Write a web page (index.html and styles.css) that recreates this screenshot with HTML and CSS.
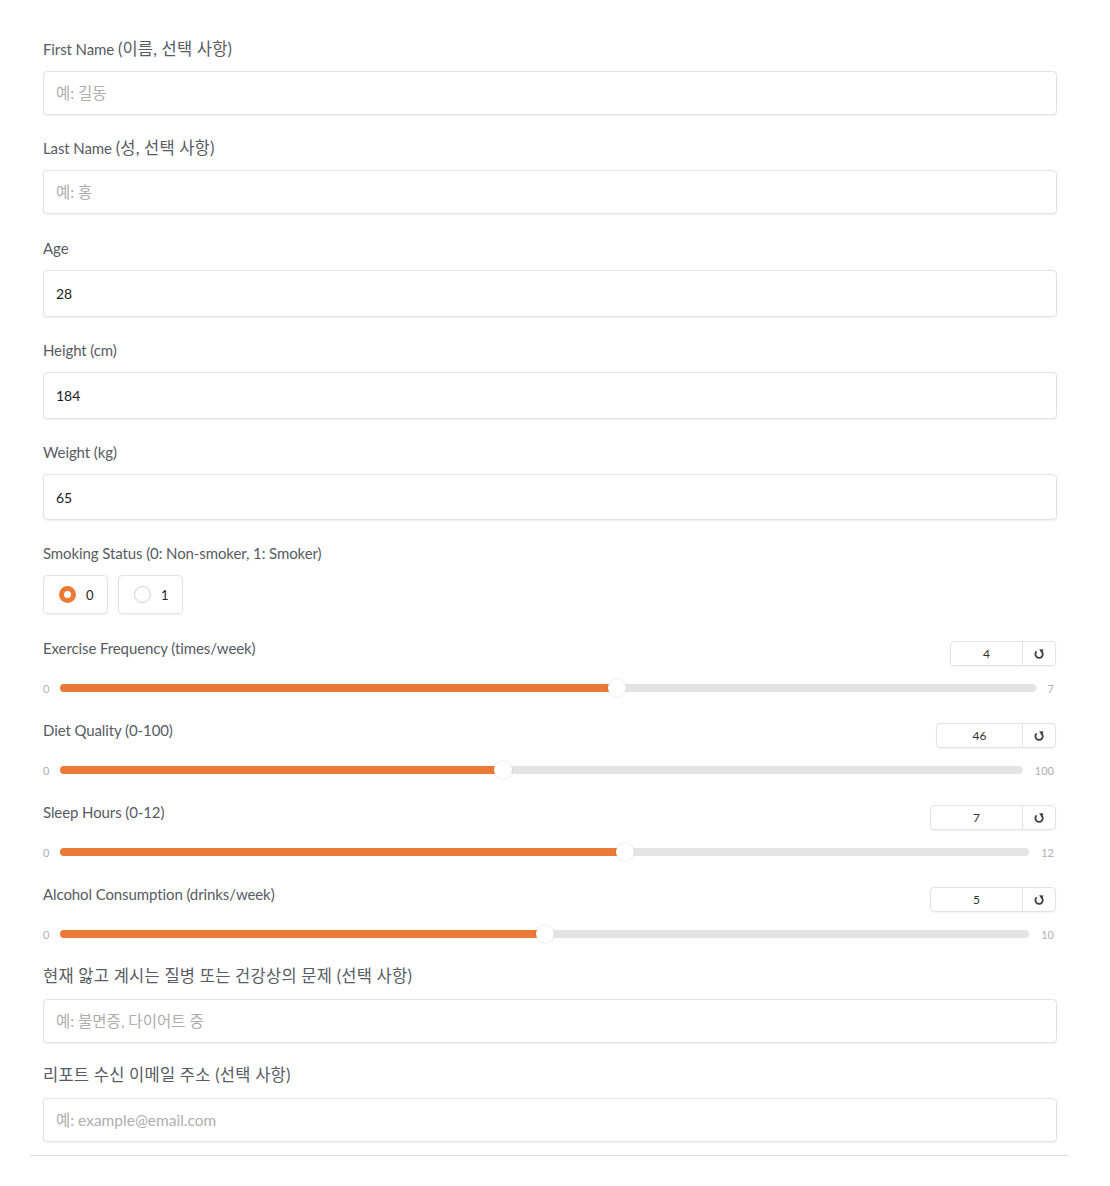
FILE: index.html
```html
<!DOCTYPE html>
<html lang="ko">
<head>
<meta charset="utf-8">
<title>Form</title>
<link rel="stylesheet" href="styles.css">
</head>
<body>
<div class="page">
  <div class="form">
    <div class="field">
      <label class="lbl">First Name <span class="ko">(이름, 선택 사항)</span></label>
      <input class="txt h44" type="text" placeholder="예: 길동">
    </div>
    <div class="field gap24">
      <label class="lbl">Last Name <span class="ko">(성, 선택 사항)</span></label>
      <input class="txt h44" type="text" placeholder="예: 홍">
    </div>
    <div class="field">
      <label class="lbl">Age</label>
      <input class="txt h47" type="text" value="28">
    </div>
    <div class="field">
      <label class="lbl">Height (cm)</label>
      <input class="txt h47" type="text" value="184">
    </div>
    <div class="field">
      <label class="lbl">Weight (kg)</label>
      <input class="txt h46" type="text" value="65">
    </div>
    <div class="field gap24">
      <label class="lbl">Smoking Status (0: Non-smoker, 1: Smoker)</label>
      <div class="radios">
        <div class="radio"><span class="dot on"></span><span>0</span></div>
        <div class="radio"><span class="dot"></span><span>1</span></div>
      </div>
    </div>

    <div class="slider">
      <div class="shead">
        <span class="lbl">Exercise Frequency (times/week)</span>
        <div class="num"><span class="val w73">4</span><span class="reset"><svg viewBox="0 0 12 12" width="12" height="12"><path d="M3.6 3.4 A3.7 3.7 0 1 0 8.3 3.2" fill="none" stroke="#3b3f4a" stroke-width="1.8"/><path d="M6.2 1.2 L10.6 1.6 L8.6 5.2 Z" fill="#3b3f4a"/></svg></span></div>
      </div>
      <div class="srow">
        <span class="mn">0</span>
        <div class="track"><div class="fill" style="width:57.14%"><span class="thumb"></span></div></div>
        <span class="mx">7</span>
      </div>
    </div>

    <div class="slider">
      <div class="shead">
        <span class="lbl">Diet Quality (0-100)</span>
        <div class="num"><span class="val w87">46</span><span class="reset"><svg viewBox="0 0 12 12" width="12" height="12"><path d="M3.6 3.4 A3.7 3.7 0 1 0 8.3 3.2" fill="none" stroke="#3b3f4a" stroke-width="1.8"/><path d="M6.2 1.2 L10.6 1.6 L8.6 5.2 Z" fill="#3b3f4a"/></svg></span></div>
      </div>
      <div class="srow">
        <span class="mn">0</span>
        <div class="track"><div class="fill" style="width:46%"><span class="thumb"></span></div></div>
        <span class="mx">100</span>
      </div>
    </div>

    <div class="slider">
      <div class="shead">
        <span class="lbl">Sleep Hours (0-12)</span>
        <div class="num"><span class="val w93">7</span><span class="reset"><svg viewBox="0 0 12 12" width="12" height="12"><path d="M3.6 3.4 A3.7 3.7 0 1 0 8.3 3.2" fill="none" stroke="#3b3f4a" stroke-width="1.8"/><path d="M6.2 1.2 L10.6 1.6 L8.6 5.2 Z" fill="#3b3f4a"/></svg></span></div>
      </div>
      <div class="srow">
        <span class="mn">0</span>
        <div class="track"><div class="fill" style="width:58.33%"><span class="thumb"></span></div></div>
        <span class="mx">12</span>
      </div>
    </div>

    <div class="slider">
      <div class="shead">
        <span class="lbl">Alcohol Consumption (drinks/week)</span>
        <div class="num"><span class="val w93">5</span><span class="reset"><svg viewBox="0 0 12 12" width="12" height="12"><path d="M3.6 3.4 A3.7 3.7 0 1 0 8.3 3.2" fill="none" stroke="#3b3f4a" stroke-width="1.8"/><path d="M6.2 1.2 L10.6 1.6 L8.6 5.2 Z" fill="#3b3f4a"/></svg></span></div>
      </div>
      <div class="srow">
        <span class="mn">0</span>
        <div class="track"><div class="fill" style="width:50%"><span class="thumb"></span></div></div>
        <span class="mx">10</span>
      </div>
    </div>

    <div class="field kfield">
      <label class="lbl kl">현재 앓고 계시는 질병 또는 건강상의 문제 (선택 사항)</label>
      <input class="txt h44" type="text" placeholder="예: 불면증, 다이어트 중">
    </div>
    <div class="field kfield last">
      <label class="lbl kl">리포트 수신 이메일 주소 (선택 사항)</label>
      <input class="txt h44" type="text" placeholder="예: example@email.com">
    </div>
  </div>
  <div class="rule"></div>
</div>
</body>
</html>
```
FILE: styles.css
```css
* { box-sizing: border-box; }
html, body { margin: 0; padding: 0; background: #fff; }
body {
  font-family: "Lato", "Noto Sans CJK KR", sans-serif;
  color: #4b4f58;
}
.page { padding-top: 39px; width: 1110px; }
.form { margin-left: 43px; width: 1014px; display: flex; flex-direction: column; }
.field { display: flex; flex-direction: column; margin-bottom: 23px; }
.field.gap24 { margin-bottom: 24px; }
.lbl {
  font-size: 15px;
  line-height: 20px;
  height: 20px;
  color: #575b64;
  margin-bottom: 12px;
  letter-spacing: -0.1px;
  white-space: nowrap;
}
.lbl .ko { font-size: 16.5px; letter-spacing: 0.2px; }
.txt {
  display: block;
  width: 1014px;
  border: 1px solid #e3e3e3;
  border-radius: 4px;
  box-shadow: 0 1px 2px rgba(0,0,0,0.06);
  padding: 0 12px;
  font-family: "Lato", "Noto Sans CJK KR", sans-serif;
  font-size: 14px;
  color: #222;
  background: #fff;
  outline: none;
}
.txt::placeholder { color: #aeaeae; font-size: 15.5px; }
.h44 { height: 44px; }
.h46 { height: 46px; }
.h47 { height: 47px; }
.radios { display: flex; gap: 10px; }
.radio {
  width: 65px; height: 39px;
  border: 1px solid #e3e3e3;
  border-radius: 4px;
  box-shadow: 0 1px 2px rgba(0,0,0,0.05);
  display: flex; align-items: center;
  padding-left: 15px; gap: 10px;
  font-size: 13px; color: #222;
}
.dot {
  width: 17px; height: 17px; border-radius: 50%;
  border: 1px solid #cfcfcf; background: #fff;
  flex: none;
}
.dot.on { border: 5px solid #ea7a34; background: #fff; }
.slider { display: flex; flex-direction: column; padding-bottom: 22px; }
.shead { display: flex; justify-content: space-between; align-items: flex-start; height: 28px; }
.shead .lbl { margin-bottom: 0; }
.num {
  margin-top: 3px;
  display: flex; height: 25px;
  border: 1px solid #e3e3e3; border-radius: 4px;
  box-shadow: 0 1px 2px rgba(0,0,0,0.05);
  margin-right: 1px;
}
.val {
  display: flex; align-items: center; justify-content: center;
  font-size: 12px; color: #333; border-right: 1px solid #e3e3e3;
}
.w73 { width: 72px; }
.w87 { width: 86px; }
.w93 { width: 92px; }
.reset { width: 32px; display: flex; align-items: center; justify-content: center; }
.srow { display: flex; align-items: center; height: 20px; margin-top: 12px; }
.mn { width: 6px; font-size: 11px; color: #b0b0b0; margin-right: 11px; text-align: center; }
.mx { font-size: 11px; color: #b0b0b0; margin-left: 12px; margin-right: 3px; }
.track { flex: 1; height: 8px; background: #e4e4e4; border-radius: 4px; position: relative; }
.fill { height: 8px; background: #ea7a36; border-radius: 4px; position: relative; }
.thumb {
  position: absolute; right: -9px; top: -5px;
  width: 18px; height: 18px; border-radius: 50%;
  background: #fff; box-shadow: 0 0 2px rgba(0,0,0,0.18);
}
.kfield { margin-bottom: 22px; }
.kl { font-size: 16.5px; letter-spacing: 0.25px; margin-bottom: 13px; }
.last { margin-bottom: 13px; }
.rule { margin-left: 30px; width: 1038px; height: 1px; background: #dcdcdc; }
```
